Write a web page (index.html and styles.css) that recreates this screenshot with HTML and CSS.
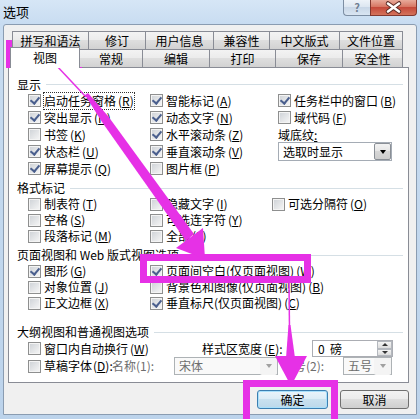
FILE: index.html
```html
<!DOCTYPE html>
<html lang="zh-CN">
<head>
    <meta charset="UTF-8">
    <title>选项</title>
    <link rel="stylesheet" href="styles.css">
</head>
<body>
    <div class="window">
        <div class="titlebar">
            <span class="title">选项</span>
            <div class="caption">
                <span class="cap-help">?</span>
                <span class="cap-close">
                    <svg width="45" height="15" viewBox="0 0 45 15">
                        <path d="M17 3.5 L28 11.5 M28 3.5 L17 11.5" stroke="#5a2a24" stroke-width="4.5" stroke-linecap="round"/>
                        <path d="M17 3.5 L28 11.5 M28 3.5 L17 11.5" stroke="#fff" stroke-width="2.6" stroke-linecap="round"/>
                    </svg>
                </span>
            </div>
        </div>

        <div class="client">
            <div class="tabs">
                <div class="tab-row tab-row-back">
                    <div class="tab">拼写和语法</div>
                    <div class="tab">修订</div>
                    <div class="tab">用户信息</div>
                    <div class="tab">兼容性</div>
                    <div class="tab">中文版式</div>
                    <div class="tab">文件位置</div>
                </div>
                <div class="tab-row tab-row-front">
                    <div class="tab active">视图</div>
                    <div class="tab">常规</div>
                    <div class="tab">编辑</div>
                    <div class="tab">打印</div>
                    <div class="tab">保存</div>
                    <div class="tab">安全性</div>
                </div>
            </div>

            <div class="panel">
                <!-- 显示 -->
                <div class="group group-display">
                    <div class="legend">显示</div>
                    <div class="opts opts-display">
                        <label class="chk on focus"><span class="box"></span><span class="txt">启动任务窗格<span class="key">(<u>R</u>)</span></span></label>
                        <label class="chk on"><span class="box"></span><span class="txt">智能标记<span class="key">(<u>A</u>)</span></span></label>
                        <label class="chk on"><span class="box"></span><span class="txt">任务栏中的窗口<span class="key">(<u>B</u>)</span></span></label>

                        <label class="chk on"><span class="box"></span><span class="txt">突出显示<span class="key">(<u>H</u>)</span></span></label>
                        <label class="chk on"><span class="box"></span><span class="txt">动态文字<span class="key">(<u>N</u>)</span></span></label>
                        <label class="chk"><span class="box"></span><span class="txt">域代码<span class="key">(<u>F</u>)</span></span></label>

                        <label class="chk"><span class="box"></span><span class="txt">书签<span class="key">(<u>K</u>)</span></span></label>
                        <label class="chk on"><span class="box"></span><span class="txt">水平滚动条<span class="key">(<u>Z</u>)</span></span></label>
                        <span class="field-label">域底纹<u>:</u></span>

                        <label class="chk on"><span class="box"></span><span class="txt">状态栏<span class="key">(<u>U</u>)</span></span></label>
                        <label class="chk on"><span class="box"></span><span class="txt">垂直滚动条<span class="key">(<u>V</u>)</span></span></label>
                        <div class="select select-shading"><span class="val">选取时显示</span><span class="drop"></span></div>

                        <label class="chk on"><span class="box"></span><span class="txt">屏幕提示<span class="key">(<u>Q</u>)</span></span></label>
                        <label class="chk"><span class="box"></span><span class="txt">图片框<span class="key">(<u>P</u>)</span></span></label>
                        <span></span>
                    </div>
                </div>

                <!-- 格式标记 -->
                <div class="group">
                    <div class="legend">格式标记</div>
                    <div class="opts opts-format">
                        <label class="chk"><span class="box"></span><span class="txt">制表符<span class="key">(<u>T</u>)</span></span></label>
                        <label class="chk"><span class="box"></span><span class="txt">隐藏文字<span class="key">(<u>I</u>)</span></span></label>
                        <label class="chk"><span class="box"></span><span class="txt">可选分隔符<span class="key">(<u>O</u>)</span></span></label>

                        <label class="chk"><span class="box"></span><span class="txt">空格<span class="key">(<u>S</u>)</span></span></label>
                        <label class="chk"><span class="box"></span><span class="txt">可选连字符<span class="key">(<u>Y</u>)</span></span></label>
                        <span></span>

                        <label class="chk"><span class="box"></span><span class="txt">段落标记<span class="key">(<u>M</u>)</span></span></label>
                        <label class="chk"><span class="box"></span><span class="txt">全部<span class="key">(<u>L</u>)</span></span></label>
                        <span></span>
                    </div>
                </div>

                <!-- 页面视图和 Web 版式视图选项 -->
                <div class="group">
                    <div class="legend">页面视图和 Web 版式视图选项</div>
                    <div class="opts opts-page">
                        <label class="chk on"><span class="box"></span><span class="txt">图形<span class="key">(<u>G</u>)</span></span></label>
                        <label class="chk on"><span class="box"></span><span class="txt">页面间空白(仅页面视图)<span class="key">(<u>W</u>)</span></span></label>

                        <label class="chk"><span class="box"></span><span class="txt">对象位置<span class="key">(<u>J</u>)</span></span></label>
                        <label class="chk"><span class="box"></span><span class="txt">背景色和图像(仅页面视图)<span class="key">(<u>B</u>)</span></span></label>

                        <label class="chk"><span class="box"></span><span class="txt">正文边框<span class="key">(<u>X</u>)</span></span></label>
                        <label class="chk on"><span class="box"></span><span class="txt">垂直标尺(仅页面视图)<span class="key">(<u>C</u>)</span></span></label>
                    </div>
                </div>

                <!-- 大纲视图和普通视图选项 -->
                <div class="group group-outline">
                    <div class="legend">大纲视图和普通视图选项</div>
                    <div class="line line-wrap">
                        <label class="chk"><span class="box"></span><span class="txt">窗口内自动换行<span class="key">(<u>W</u>)</span></span></label>
                        <span class="field-label">样式区宽度<span class="key">(<u>E</u>):</span></span>
                        <div class="spin"><span class="val">0&nbsp;&nbsp;磅</span><span class="arrows"><span class="up"></span><span class="down"></span></span></div>
                    </div>
                    <div class="line line-draft">
                        <label class="chk"><span class="box"></span><span class="txt">草稿字体<span class="key">(<u>D</u>):</span></span></label>
                        <span class="field-label dim">名称(1):</span>
                        <div class="select disabled"><span class="val">宋体</span><span class="drop"></span></div>
                        <span class="field-label dim size-label">字号(2):</span>
                        <div class="select disabled"><span class="val">五号</span><span class="drop"></span></div>
                    </div>
                </div>
            </div>

            <div class="actions">
                <button class="btn btn-ok">确定</button>
                <button class="btn btn-cancel">取消</button>
            </div>
        </div>

        <!-- 标注 -->
        <svg class="annot" width="420" height="419" viewBox="0 0 420 419">
            <rect x="9.5" y="43.5" width="69" height="21" fill="none" stroke="#e631e6" stroke-width="7"/>
            <rect x="143.5" y="257.5" width="164" height="22" fill="none" stroke="#e631e6" stroke-width="7"/>
            <rect x="246.5" y="383.5" width="88" height="44" fill="none" stroke="#e631e6" stroke-width="7"/>
            <path d="M55 64 L86 97" stroke="#e631e6" stroke-width="1.5"/>
            <polygon points="85,95 88,93 108,116 194,234 186,241 102,122" fill="#e631e6"/>
            <polygon points="176,248 203,228 205,259" fill="#e631e6"/>
            <path d="M289 283 L289.5 330" stroke="#e631e6" stroke-width="1.5"/>
            <polygon points="288.5,325 290.5,325 295,358 286,358" fill="#e631e6"/>
            <polygon points="275,356 307,356 291,386" fill="#e631e6"/>
        </svg>
    </div>
</body>
</html>
```

FILE: styles.css
```css
* {
    margin: 0;
    padding: 0;
    box-sizing: border-box;
}

body {
    width: 420px;
    height: 419px;
    overflow: hidden;
    font-family: "Noto Sans CJK SC", "Noto Sans", sans-serif;
    font-size: 12px;
    line-height: 16px;
    color: #000;
    background: #c4d9ef;
}

.window {
    position: relative;
    width: 420px;
    height: 419px;
    background: linear-gradient(to bottom, #d6e6f6 0, #c8dcf1 24px, #bcd3eb 100%);
}

/* 标题栏 */
.titlebar {
    height: 24px;
    display: flex;
    justify-content: space-between;
    align-items: flex-start;
}

.title {
    font-size: 13px;
    line-height: 24px;
    padding-left: 3px;
}

.caption {
    display: flex;
    margin-right: 3px;
}

.cap-help {
    width: 27px;
    height: 16px;
    border: 1px solid #7d8ea3;
    border-top: none;
    border-right: none;
    border-radius: 0 0 0 4px;
    background: linear-gradient(#eef3f9, #dbe5f0 50%, #c9d7e7 50%, #d9e5f2);
    color: #6f7e92;
    font-weight: bold;
    font-size: 11px;
    line-height: 15px;
    text-align: center;
}

.cap-close {
    width: 47px;
    height: 16px;
    border: 1px solid #83382f;
    border-top: none;
    border-radius: 0 0 4px 0;
    background: linear-gradient(#e8aa9a, #d77663 45%, #c5493a 50%, #d4735c);
}

.cap-close svg {
    display: block;
}

/* 对话框主体 */
.client {
    margin: 0 3px;
    height: 391px;
    background: #f0f0f0;
    border: 1px solid #8a9cb1;
    border-radius: 3px 3px 0 0;
    padding: 6px 0 0 4px;
}

.tabs {
    margin-left: 4px;
    height: 36px;
    position: relative;
    z-index: 1;
}

.tab-row {
    display: grid;
    height: 18px;
}

.tab-row-back {
    grid-template-columns: 77px 57px 68px 56px 70px 63px;
}

.tab-row-front {
    grid-template-columns: 68px 63px 67px 66px 67px 60px;
}

.tab {
    border: 1px solid #898c95;
    border-bottom: none;
    border-left: none;
    text-align: center;
    line-height: 17px;
    background: linear-gradient(#f3f3f3, #ebebeb 50%, #dedede 50%, #d2d2d2);
}

.tab:first-child {
    border-left: 1px solid #898c95;
}

.tab.active {
    position: relative;
    z-index: 2;
    margin: -2px 0 -1px -2px;
    background: #fff;
    line-height: 19px;
}

.panel {
    width: 401px;
    height: 316px;
    background: #fff;
    border: 1px solid #898c95;
    padding: 9px 5px 0 19px;
}

.group + .group {
    margin-top: 3px;
}

.group-outline {
    margin-top: 13px !important;
}

.legend {
    display: flex;
    align-items: center;
    height: 16px;
    margin-left: -11px;
    white-space: nowrap;
}

.group-display .legend {
    height: 15px;
}

.legend::after {
    content: "";
    flex: 1;
    border-top: 1px solid #d5dfe5;
    margin-left: 5px;
}

.opts {
    display: grid;
    grid-auto-rows: 16px;
    align-items: center;
}

.opts-display {
    grid-template-columns: 122px 128px 1fr;
    grid-auto-rows: 17px;
}

.opts-format {
    grid-template-columns: 122px 122px 1fr;
}

.opts-page {
    grid-template-columns: 122px 1fr;
}

/* 复选框 */
.chk {
    display: flex;
    align-items: center;
    gap: 3px;
    white-space: nowrap;
}

.box {
    position: relative;
    flex: none;
    width: 13px;
    height: 13px;
    border: 1px solid #8e8f8f;
    background: linear-gradient(135deg, #cdd1d6, #f7f7f7);
    box-shadow: inset 0 0 0 1px #f4f4f4;
}

.chk.on .box::after {
    content: "";
    position: absolute;
    left: 3px;
    top: 0;
    width: 4px;
    height: 7px;
    border: solid #4a5f8e;
    border-width: 0 2px 2px 0;
    transform: rotate(40deg);
}

.key {
    margin-left: 2px;
}

u {
    text-decoration: underline;
    text-underline-offset: 1px;
}

.focus .txt {
    outline: 1px dotted #333;
}

.field-label {
    white-space: nowrap;
}

.dim {
    color: #6d6d6d;
}

/* 下拉框 */
.select {
    display: flex;
    align-items: center;
    height: 19px;
    border: 1px solid #a5acb5;
    background: #fff;
}

.select-shading {
    width: 114px;
}

.select .val {
    flex: 1;
    padding-left: 4px;
}

.select .drop {
    width: 17px;
    height: 17px;
    border: 1px solid #8a8f96;
    border-radius: 2px;
    background: linear-gradient(#f2f2f2, #e6e6e6 50%, #d7d7d7 50%, #cdcdcd);
    display: flex;
    align-items: center;
    justify-content: center;
}

.select .drop::before {
    content: "";
    border-top: 4px solid #000;
    border-left: 3.5px solid transparent;
    border-right: 3.5px solid transparent;
}

.select.disabled {
    height: 18px;
    border-color: #adb2b5;
    background: #f9f9f9;
    color: #6d6d6d;
}

.select.disabled .drop {
    border-color: transparent;
    background: #f4f4f4;
}

.select.disabled .drop::before {
    border-top-color: #a0a0a0;
}

/* 大纲视图行 */
.line {
    display: grid;
    align-items: center;
    height: 17px;
}

.line-wrap {
    grid-template-columns: 174px 110px 81px;
}

.line-draft {
    grid-template-columns: 84px 62px 104px 65px 49px;
}

.line-draft .key {
    margin-left: 1px;
}

.size-label {
    padding-left: 4px;
}

.spin {
    display: flex;
    height: 17px;
    border: 1px solid #abadb3;
    background: #fff;
}

.spin .val {
    flex: 1;
    padding-left: 5px;
    line-height: 15px;
}

.spin .arrows {
    width: 15px;
    display: flex;
    flex-direction: column;
}

.spin .up,
.spin .down {
    flex: 1;
    display: flex;
    align-items: center;
    justify-content: center;
    border: 1px solid #b4b8be;
    background: linear-gradient(#f4f4f4, #dcdcdc);
}

.spin .up::before {
    content: "";
    border-bottom: 3px solid #333;
    border-left: 3px solid transparent;
    border-right: 3px solid transparent;
}

.spin .down::before {
    content: "";
    border-top: 3px solid #333;
    border-left: 3px solid transparent;
    border-right: 3px solid transparent;
}

/* 按钮 */
.actions {
    display: flex;
    justify-content: flex-end;
    gap: 12px;
    width: 401px;
    margin-top: 7px;
}

.btn {
    height: 19px;
    border: 1px solid #707070;
    border-radius: 3px;
    background: linear-gradient(#f2f2f2, #ebebeb 50%, #dddddd 50%, #cfcfcf);
    font-family: inherit;
    font-size: 12px;
    line-height: 17px;
    text-align: center;
    color: #000;
}

.btn-ok {
    width: 71px;
    border-color: #3c7fb1;
    box-shadow: inset 0 0 0 1px #a9e0fb;
    background: linear-gradient(#eaf4fa, #dbecf6 50%, #c9e1ef 50%, #bcd8ea);
}

.btn-cancel {
    width: 69px;
}

/* 标注层 */
.annot {
    position: absolute;
    top: 0;
    left: 0;
    pointer-events: none;
}
```
